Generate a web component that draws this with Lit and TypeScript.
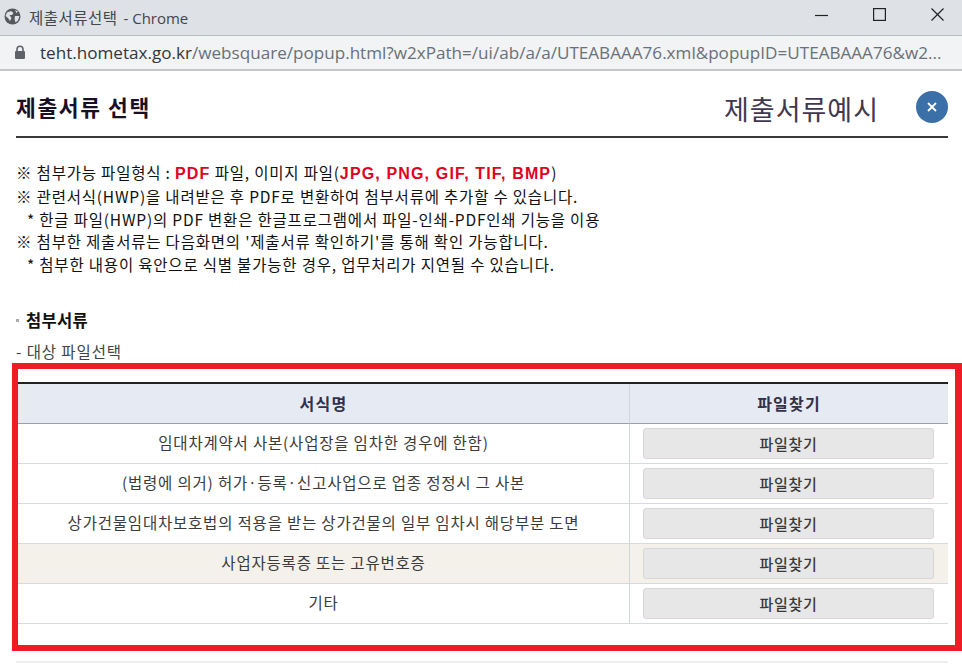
import { LitElement, html, css } from "lit";
import { customElement } from "lit/decorators.js";

const ROWS = [
  { name: "임대차계약서 사본(사업장을 임차한 경우에 한함)" },
  { name: "(법령에 의거) 허가·등록·신고사업으로 업종 정정시 그 사본" },
  { name: "상가건물임대차보호법의 적용을 받는 상가건물의 일부 임차시 해당부분 도면" },
  { name: "사업자등록증 또는 고유번호증", tint: true },
  { name: "기타" },
];

@customElement("app-root")
export class AppRoot extends LitElement {
  static styles = css`
    :host {
      display: block;
      width: 962px;
      height: 667px;
      overflow: hidden;
      background: #fff;
      font-family: "Noto Sans CJK KR", "Noto Sans", sans-serif;
      color: #222;
    }
    .titlebar {
      height: 36px;
      box-sizing: border-box;
      background: #dee1e6;
      border-bottom: 1px solid #b9bbbf;
      display: flex;
      align-items: center;
      padding: 0 18px 2px 4px;
      font-size: 14px;
      color: #43464b;
    }
    .globe { width: 17px; height: 17px; margin-right: 8px; flex: none; }
    .wintitle { flex: 1; white-space: nowrap; font-family: "Open Sans", "Noto Sans CJK KR", sans-serif; font-size: 15px; }
    .wintitle span { font-family: "Noto Sans CJK KR", sans-serif; font-size: 15.5px; letter-spacing: 0.5px; margin-right: 2px; }
    .winbtns { display: flex; align-items: center; gap: 45px; padding-bottom: 4px; }
    .winbtns svg { width: 13px; height: 13px; display: block; }
    .addr {
      height: 35px;
      box-sizing: border-box;
      background: #f1f3f4;
      border-bottom: 2px solid #c6c7c9;
      display: flex;
      align-items: center;
      padding-left: 14px;
      font-family: "Open Sans", "Noto Sans", sans-serif;
      font-size: 17.1px;
      color: #6a7078;
      white-space: nowrap;
      padding-bottom: 1px;
    }
    .lock { width: 12px; height: 15px; margin-right: 14px; flex: none; }
    .addr b { font-weight: 400; color: #33373c; }
    .page { padding: 0 14px 0 16px; }
    .head {
      height: 67px;
      box-sizing: border-box;
      border-bottom: 2px solid #3a3a3a;
      display: flex;
      align-items: center;
      padding-top: 10px;
    }
    .head h1 { margin: 0 0 4px; flex: 1; font-size: 21.5px; font-weight: 700; color: #1a1025; letter-spacing: 1.6px; }
    .example { font-size: 27px; color: #40384e; letter-spacing: 1px; margin-right: 37px; line-height: 36px; }
    .close {
      width: 32px; height: 32px; border-radius: 50%;
      background: #3a6fa8; display: flex; align-items: center; justify-content: center;
      margin-bottom: 3px; flex: none;
    }
    .close svg { width: 10px; height: 10px; display: block; }
    .notes { margin-top: 23px; font-size: 15.5px; line-height: 22.4px; color: #111; white-space: nowrap; letter-spacing: 0.8px; }
    .notes .sub { padding-left: 11px; }
    .notes em { font-style: normal; font-weight: 700; color: #e00024; font-family: "Liberation Sans", sans-serif; font-size: 16px; letter-spacing: 1.15px; }
    .section { margin-top: 34px; display: flex; align-items: center; font-size: 16.5px; font-weight: 700; color: #111; line-height: 22px; letter-spacing: 0.3px; }
    .section i { width: 3px; height: 3px; background: #aaa; margin-right: 7px; }
    .target { margin-top: 9px; font-size: 15.5px; color: #444; line-height: 22px; letter-spacing: 0.9px; }
    .frame {
      margin: 1px -14px 0 -4px;
      height: 288px;
      box-sizing: border-box;
      border: 6.5px solid #ee1c25;
      border-right-width: 7px;
      padding: 13px 7px 0 0;
    }
    table {
      width: 930px;
      border-collapse: separate;
      border-spacing: 0;
      table-layout: fixed;
      border-top: 2px solid #222;
    }
    th {
      height: 40px;
      padding: 0 0 2px;
      box-sizing: border-box;
      background: #e6ebf3;
      border-bottom: 1px solid #98a0aa;
      font-size: 16px;
      font-weight: 700;
      color: #33304a;
      letter-spacing: 1.2px;
    }
    td {
      height: 40px;
      box-sizing: border-box;
      padding: 0 0 3px;
      border-bottom: 1px solid #d5dae0;
      text-align: center;
      font-size: 15.5px;
      letter-spacing: 0.8px;
      color: #3b3b3b;
      white-space: nowrap;
    }
    td.c2 { padding: 0; }
    .c2 { border-left: 1px solid #cfd6de; }
    .tint td { background: #f4f0ea; }
    .btn {
      display: block;
      box-sizing: border-box;
      width: 291px;
      height: 31px;
      margin: 0 auto 0 13px;
      border: 1px solid #d6d6d6;
      border-radius: 3px;
      background: #e8e7e7;
      font: 500 15px "Noto Sans CJK KR", sans-serif;
      letter-spacing: 0.7px;
      color: #3a3a3a;
      padding: 0;
    }
    .foot { margin-top: 10px; height: 2px; background: #eeeeee; }
  `;

  render() {
    return html`
      <div class="titlebar">
        <svg class="globe" viewBox="0 0 17 17">
          <circle cx="8.5" cy="8.5" r="8" fill="#55585d"></circle>
          <path d="M3 4.5 L7 3 L9.5 5 L8 7 L5.5 7 L7.5 10 L6 13 L4 10 L1.5 8 Z M11 8 L15.5 8 L14 12.5 L11.5 14.5 L10.5 11 Z M11 2 L14 3.5 L12.5 5 Z" fill="#dee1e6"></path>
        </svg>
        <span class="wintitle"><span>제출서류선택</span> - Chrome</span>
        <div class="winbtns">
          <svg viewBox="0 0 13 13"><path d="M0 7.5 H13" stroke="#222" stroke-width="1.2"></path></svg>
          <svg viewBox="0 0 13 13"><rect x="0.6" y="0.6" width="11.8" height="11.8" fill="none" stroke="#222" stroke-width="1.2"></rect></svg>
          <svg viewBox="0 0 13 13"><path d="M0.5 0.5 L12.5 12.5 M12.5 0.5 L0.5 12.5" stroke="#222" stroke-width="1.2"></path></svg>
        </div>
      </div>
      <div class="addr">
        <svg class="lock" viewBox="0 0 12 15">
          <path d="M3 6 V4.2 a3 3 0 0 1 6 0 V6" fill="none" stroke="#5f6368" stroke-width="1.6"></path>
          <rect x="1" y="6" width="10" height="8" rx="1" fill="#5f6368"></rect>
        </svg>
        <span><b>teht.hometax.go.kr</b>/websquare/popup.html?w2xPath=/ui/ab/a/a/UTEABAAA76.xml&amp;popupID=UTEABAAA76&amp;w2...</span>
      </div>
      <div class="page">
        <div class="head">
          <h1>제출서류 선택</h1>
          <span class="example">제출서류예시</span>
          <span class="close">
            <svg viewBox="0 0 10 10"><path d="M1 1 L9 9 M9 1 L1 9" stroke="#fff" stroke-width="1.8"></path></svg>
          </span>
        </div>
        <div class="notes">
          <div>※ 첨부가능 파일형식 : <em>PDF</em> 파일, 이미지 파일(<em>JPG, PNG, GIF, TIF, BMP</em>)</div>
          <div>※ 관련서식(HWP)을 내려받은 후 PDF로 변환하여 첨부서류에 추가할 수 있습니다.</div>
          <div class="sub">* 한글 파일(HWP)의 PDF 변환은 한글프로그램에서 파일-인쇄-PDF인쇄 기능을 이용</div>
          <div>※ 첨부한 제출서류는 다음화면의 '제출서류 확인하기'를 통해 확인 가능합니다.</div>
          <div class="sub">* 첨부한 내용이 육안으로 식별 불가능한 경우, 업무처리가 지연될 수 있습니다.</div>
        </div>
        <div class="section"><i></i>첨부서류</div>
        <div class="target">- 대상 파일선택</div>
        <div class="frame">
          <table>
            <colgroup><col style="width:611px" /><col style="width:319px" /></colgroup>
            <thead><tr><th>서식명</th><th class="c2">파일찾기</th></tr></thead>
            <tbody>
              ${ROWS.map(
                (r) => html`<tr class=${r.tint ? "tint" : ""}>
                  <td>${r.name}</td>
                  <td class="c2"><button class="btn">파일찾기</button></td>
                </tr>`
              )}
            </tbody>
          </table>
        </div>
        <div class="foot"></div>
      </div>
    `;
  }
}
